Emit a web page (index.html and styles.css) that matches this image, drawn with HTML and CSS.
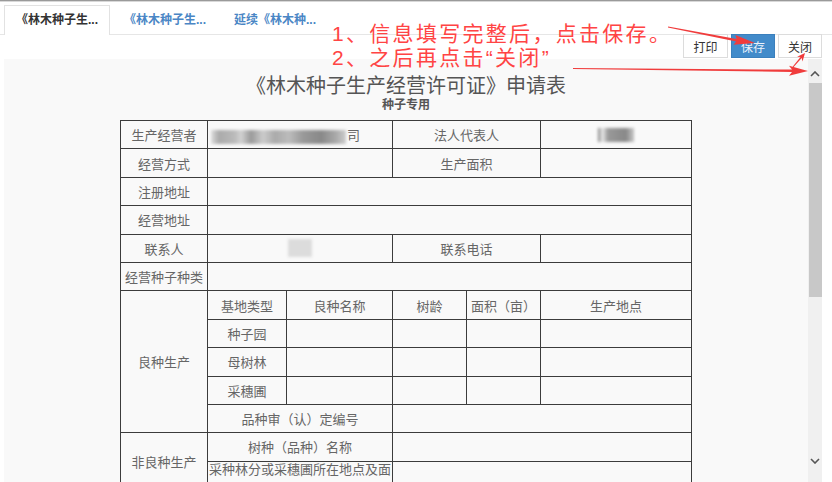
FILE: index.html
```html
<!DOCTYPE html>
<html lang="zh">
<head>
    <meta charset="UTF-8">
    <meta name="viewport" content="width=device-width, initial-scale=1.0">
    <title>《林木种子生产经营许可证》申请表</title>
    <link rel="stylesheet" href="styles.css">
</head>
<body>

<div class="top-line"></div>

<div class="tabs">
    <div class="tab active">《林木种子生...</div>
    <div class="tab">《林木种子生...</div>
    <div class="tab">延续《林木种...</div>
</div>

<div class="toolbar">
    <button class="btn">打印</button>
    <button class="btn btn-primary">保存</button>
    <button class="btn">关闭</button>
</div>

<div class="content">
    <div class="page">
        <h2 class="form-title">《林木种子生产经营许可证》申请表</h2>
        <div class="form-sub">种子专用</div>

        <table class="form-table">
            <colgroup>
                <col style="width: 87px">
                <col style="width: 79px">
                <col style="width: 106px">
                <col style="width: 74px">
                <col style="width: 74px">
                <col style="width: 151px">
            </colgroup>
            <tr>
                <td>生产经营者</td>
                <td colspan="2" class="value-left"><span class="mask mask-company"></span>司</td>
                <td colspan="2">法人代表人</td>
                <td><span class="mask mask-name"></span></td>
            </tr>
            <tr>
                <td>经营方式</td>
                <td colspan="2"></td>
                <td colspan="2">生产面积</td>
                <td></td>
            </tr>
            <tr>
                <td>注册地址</td>
                <td colspan="5"></td>
            </tr>
            <tr>
                <td>经营地址</td>
                <td colspan="5"></td>
            </tr>
            <tr>
                <td>联系人</td>
                <td colspan="2"><span class="mask mask-contact"></span></td>
                <td colspan="2">联系电话</td>
                <td></td>
            </tr>
            <tr>
                <td>经营种子种类</td>
                <td colspan="5"></td>
            </tr>
            <tr>
                <td rowspan="5">良种生产</td>
                <td>基地类型</td>
                <td>良种名称</td>
                <td>树龄</td>
                <td>面积（亩）</td>
                <td>生产地点</td>
            </tr>
            <tr>
                <td>种子园</td>
                <td></td>
                <td></td>
                <td></td>
                <td></td>
            </tr>
            <tr>
                <td>母树林</td>
                <td></td>
                <td></td>
                <td></td>
                <td></td>
            </tr>
            <tr>
                <td>采穗圃</td>
                <td></td>
                <td></td>
                <td></td>
                <td></td>
            </tr>
            <tr>
                <td colspan="2">品种审（认）定编号</td>
                <td colspan="3"></td>
            </tr>
            <tr>
                <td rowspan="2">非良种生产</td>
                <td colspan="2">树种（品种）名称</td>
                <td colspan="3"></td>
            </tr>
            <tr>
                <td colspan="2" class="wrap">采种林分或采穗圃所在地点及面</td>
                <td colspan="3"></td>
            </tr>
        </table>
    </div>

    <div class="scrollbar">
        <div class="scroll-up">
            <svg width="10" height="6" viewBox="0 0 10 6"><path d="M1 5 L5 1 L9 5" fill="none" stroke="#555" stroke-width="1.6"/></svg>
        </div>
        <div class="scroll-thumb"></div>
        <div class="scroll-down">
            <svg width="10" height="6" viewBox="0 0 10 6"><path d="M1 1 L5 5 L9 1" fill="none" stroke="#555" stroke-width="1.6"/></svg>
        </div>
    </div>
</div>

<!-- 操作提示 -->
<div class="tips">
    <p>1、信息填写完整后，点击保存。</p>
    <p>2、之后再点击“关闭”</p>
</div>

<svg class="arrows" width="832" height="482" viewBox="0 0 832 482">
    <polygon points="668.1,26.6 736.6,39.0 735.4,34.9 755,43 733.5,44.7 736.2,41.4 667.9,27.4"/>
    <polygon points="573,68.1 792,69.6 789,65.8 808,71 789,75.8 792,72.0 573,68.9"/>
    <polygon points="793.4,67.3 801.7,58.1 802.5,61.4 805,53 797.1,56.8 800.5,57.1 792.6,66.7"/>
</svg>

</body>
</html>
```

FILE: styles.css
```css
* {
    box-sizing: border-box;
}
body {
    margin: 0;
    height: 482px;
    overflow: hidden;
    position: relative;
    font-family: "Liberation Sans", "Noto Sans CJK SC", sans-serif;
    font-size: 12px;
    color: #333;
    background: #fff;
}
.top-line {
    height: 2px;
    border-top: 1px solid #9a9a9a;
    background: #d8d8d8;
}
.tabs {
    display: flex;
    height: 33px;
    padding: 3px 0 0 4px;
    border-bottom: 1px solid #e6e6e6;
}
.tab {
    height: 30px;
    line-height: 29px;
    text-align: center;
    font-weight: bold;
    color: #4a86c5;
    width: 110px;
    border: 1px solid transparent;
    border-bottom: none;
}
.tab.active {
    width: 106px;
    color: #333;
    background: #fff;
    border-color: #e2e2e2;
}
.toolbar {
    display: flex;
    justify-content: flex-end;
    gap: 3px;
    height: 24px;
    margin-top: -1px;
    padding-right: 10px;
}
.btn {
    width: 44px;
    height: 24px;
    padding: 0;
    border: 1px solid #dcdcdc;
    background: #fff;
    color: #333;
    font-family: inherit;
    font-size: 12px;
}
.btn:first-child {
    width: 45px;
}
.btn-primary {
    background: #428bca;
    border-color: #3b80bd;
    color: #eaf2fb;
}
.content {
    display: flex;
    height: 423px;
    margin: 1px 10px 0 4px;
    background: #f9f9f9;
}
.page {
    flex: 1;
    overflow: hidden;
}
.form-title {
    margin: 17px 0 0;
    text-align: center;
    font-size: 20px;
    font-weight: normal;
    line-height: 21px;
    color: #555;
}
.form-sub {
    margin-top: 1px;
    text-align: center;
    font-size: 12px;
    font-weight: bold;
    line-height: 14px;
    color: #555;
}
.form-table {
    width: 572px;
    margin: 8px auto 0;
    border-collapse: collapse;
    table-layout: fixed;
    font-size: 13px;
    color: #666;
}
.form-table tr {
    height: 28.4px;
}
.form-table td {
    padding: 0;
    border: 1px solid #3c3c3c;
    text-align: center;
    white-space: nowrap;
}
.form-table td.value-left {
    text-align: left;
    padding-left: 3px;
}
.form-table td.wrap {
    vertical-align: top;
    line-height: 15px;
    overflow: hidden;
}
/* 打码的内容 */
.mask {
    display: inline-block;
    vertical-align: middle;
    filter: blur(1.5px);
}
.mask-company {
    width: 135px;
    height: 14px;
    margin-right: 1px;
    background: linear-gradient(90deg, #ddd 0, #aaa 8px, #bbb 24px, #d2d2d2 30px, #999 40px, #ccc 52px, #aaa 64px, #bcbcbc 78px, #999 92px, #888 110px, #aaa 125px, #ccc 135px);
}
.mask-name {
    width: 36px;
    height: 14px;
    background: linear-gradient(90deg, #777 0, #eee 4px, #999 10px, #888 28px, #bbb 34px);
}
.mask-contact {
    width: 24px;
    height: 18px;
    background: #dcdcdc;
}
.scrollbar {
    display: flex;
    flex-direction: column;
    width: 14px;
    background: #f0f0f0;
}
.scroll-up {
    height: 24px;
    display: flex;
    justify-content: center;
    padding-top: 12px;
}
.scroll-thumb {
    height: 214px;
    margin-left: 1px;
    background: #c8c8c8;
}
.scroll-down {
    margin-top: auto;
    height: 24px;
    display: flex;
    justify-content: center;
}
.tips {
    position: absolute;
    left: 332px;
    top: 22px;
    color: #f44;
    font-size: 21px;
    letter-spacing: 2.3px;
    line-height: 24px;
}
.tips p {
    margin: 0;
}
.arrows {
    position: absolute;
    left: 0;
    top: 0;
    fill: #f03c3c;
    pointer-events: none;
}
```
